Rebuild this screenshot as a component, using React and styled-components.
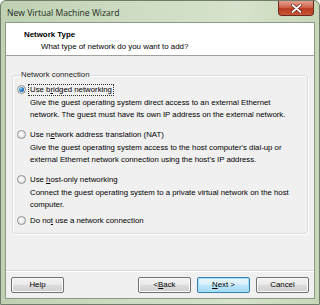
import React from "react";
import styled, { createGlobalStyle } from "styled-components";

const Global = createGlobalStyle`
    html, body {
        margin: 0;
        padding: 0;
        background: #ffffff;
    }
`;

const Window = styled.div`
    display: flex;
    flex-direction: column;
    width: 320px;
    height: 305px;
    box-sizing: border-box;
    border: 1px solid #6f7d6a;
    border-radius: 6px 6px 0 0;
    background: linear-gradient(90deg, #bfd1b2 0%, #cddcc2 40%, #d7e3cc 75%, #c6d7b8 100%);
    font-family: "Liberation Sans", Arial, sans-serif;
    overflow: hidden;
`;

const TitleBar = styled.div`
    display: flex;
    align-items: flex-start;
    height: 21px;
    flex: none;
`;

const Title = styled.div`
    padding: 6px 0 0 6px;
    font-family: "Open Sans", "Noto Sans", sans-serif;
    font-size: 8.6px;
    color: #1e2a1e;
    line-height: 12px;
`;

const CloseButton = styled.div`
    margin-left: auto;
    margin-right: 5px;
    width: 36px;
    height: 15px;
    box-sizing: border-box;
    border: 1px solid #6d2a20;
    border-top: none;
    border-radius: 0 0 4px 4px;
    background: linear-gradient(180deg, #e2a08e 0%, #d0664d 45%, #b83a1f 55%, #c9573a 100%);
    display: flex;
    align-items: center;
    justify-content: center;
`;

const Client = styled.div`
    flex: 1;
    display: flex;
    flex-direction: column;
    margin: 0 4px 5px 4px;
    border: 1px solid #8a9a86;
    background: #f0f0f0;
`;

const Header = styled.div`
    height: 33px;
    flex: none;
    background: #ffffff;
    border-bottom: 1px solid #a0a0a0;
    box-sizing: border-box;
    padding: 6px 0 0 18px;
    font-size: 7.9px;
    color: #000;
`;

const HeaderTitle = styled.div`
    font-weight: bold;
    line-height: 12px;
`;

const HeaderSub = styled.div`
    padding-left: 17px;
    line-height: 12px;
`;

const Body = styled.div`
    flex: 1;
    padding: 14px 6px 0 6px;
`;

const GroupBox = styled.fieldset`
    margin: 0;
    padding: 4px 6px 7px 4px;
    border: 1px solid #d5dfe5;
    border-radius: 3px;
    box-shadow: inset 1px 1px 0 #ffffff, 1px 1px 0 #ffffff;
    font-size: 7.8px;
    color: #000;
`;

const Legend = styled.legend`
    padding: 0 1px;
    margin-left: 3px;
    line-height: 10px;
    color: #1a1a1a;
`;

const Option = styled.div`
    margin-top: ${(p) => p.gap}px;
`;

const OptionRow = styled.div`
    display: flex;
    align-items: center;
    height: 11px;
`;

const Radio = styled.span`
    width: 9px;
    height: 9px;
    flex: none;
    box-sizing: border-box;
    border-radius: 50%;
    border: 1px solid #8e8f8f;
    background: radial-gradient(circle at 40% 40%, #ffffff 0%, #e8e8e8 60%, #d4d4d4 100%);
    display: flex;
    align-items: center;
    justify-content: center;
    &::after {
        content: "";
        display: ${(p) => (p.checked ? "block" : "none")};
        width: 5px;
        height: 5px;
        border-radius: 50%;
        background: radial-gradient(circle at 35% 35%, #8fd3ff 0%, #1a6fc0 55%, #0c3f78 100%);
    }
`;

const Label = styled.span`
    margin-left: 2px;
    padding: 0 1px;
    line-height: 10px;
    border: 1px ${(p) => (p.focused ? "dotted #333" : "solid transparent")};
    white-space: nowrap;
`;

const Desc = styled.div`
    padding-left: 13px;
    margin-top: 2px;
    line-height: 12px;
    white-space: nowrap;
    color: #000;
`;

const Footer = styled.div`
    flex: none;
    height: 27px;
    border-top: 1px solid #d6d6d6;
    box-shadow: inset 0 1px 0 #ffffff;
    display: flex;
    align-items: center;
    padding: 0 5px 0 5px;
    gap: 6px;
`;

const Spacer = styled.div`
    flex: 1;
`;

const Button = styled.div`
    width: 53px;
    height: 16px;
    box-sizing: border-box;
    border: 1px solid ${(p) => (p.primary ? "#3c7fb1" : "#707070")};
    border-radius: 2px;
    background: ${(p) =>
        p.primary
            ? "linear-gradient(180deg, #eaf6fd 0%, #d9f0fc 45%, #bee6fd 50%, #a7d9f5 100%)"
            : "linear-gradient(180deg, #f2f2f2 0%, #ebebeb 45%, #dddddd 50%, #cfcfcf 100%)"};
    box-shadow: inset 0 0 0 1px ${(p) => (p.primary ? "#9fe0fc" : "#fcfcfc")};
    display: flex;
    align-items: center;
    justify-content: center;
    font-size: 7.8px;
    color: #000;
`;

const options = [
    {
        label: <>Use b<u>r</u>idged networking</>,
        desc: ["Give the guest operating system direct access to an external Ethernet", "network. The guest must have its own IP address on the external network."],
        checked: true,
        gap: 0,
    },
    {
        label: <>Use n<u>e</u>twork address translation (NAT)</>,
        desc: ["Give the guest operating system access to the host computer's dial-up or", "external Ethernet network connection using the host's IP address."],
        gap: 8,
    },
    {
        label: <>Use <u>h</u>ost-only networking</>,
        desc: ["Connect the guest operating system to a private virtual network on the host", "computer."],
        gap: 8,
    },
    {
        label: <>Do no<u>t</u> use a network connection</>,
        desc: [],
        gap: 4,
    },
];

const App = () => {
    return (
        <>
            <Global />
            <Window>
                <TitleBar>
                    <Title>New Virtual Machine Wizard</Title>
                    <CloseButton>
                        <svg width="11" height="9" viewBox="0 0 11 9">
                            <path d="M1.5 1 L9.5 8 M9.5 1 L1.5 8" stroke="#5a1a10" strokeWidth="3" strokeLinecap="round" />
                            <path d="M1.5 1 L9.5 8 M9.5 1 L1.5 8" stroke="#ffffff" strokeWidth="1.7" strokeLinecap="round" />
                        </svg>
                    </CloseButton>
                </TitleBar>
                <Client>
                    <Header>
                        <HeaderTitle>Network Type</HeaderTitle>
                        <HeaderSub>What type of network do you want to add?</HeaderSub>
                    </Header>
                    <Body>
                        <GroupBox>
                            <Legend>Network connection</Legend>
                            {options.map((o, i) => (
                                <Option key={i} gap={o.gap}>
                                    <OptionRow>
                                        <Radio checked={o.checked} />
                                        <Label focused={o.checked}>{o.label}</Label>
                                    </OptionRow>
                                    {o.desc.length > 0 && (
                                        <Desc>
                                            {o.desc.map((d, j) => (
                                                <div key={j}>{d}</div>
                                            ))}
                                        </Desc>
                                    )}
                                </Option>
                            ))}
                        </GroupBox>
                    </Body>
                    <Footer>
                        <Button>Help</Button>
                        <Spacer />
                        <Button>&lt; <u>B</u>ack</Button>
                        <Button primary><u>N</u>ext &gt;</Button>
                        <Button>Cancel</Button>
                    </Footer>
                </Client>
            </Window>
        </>
    );
};

export default App;
